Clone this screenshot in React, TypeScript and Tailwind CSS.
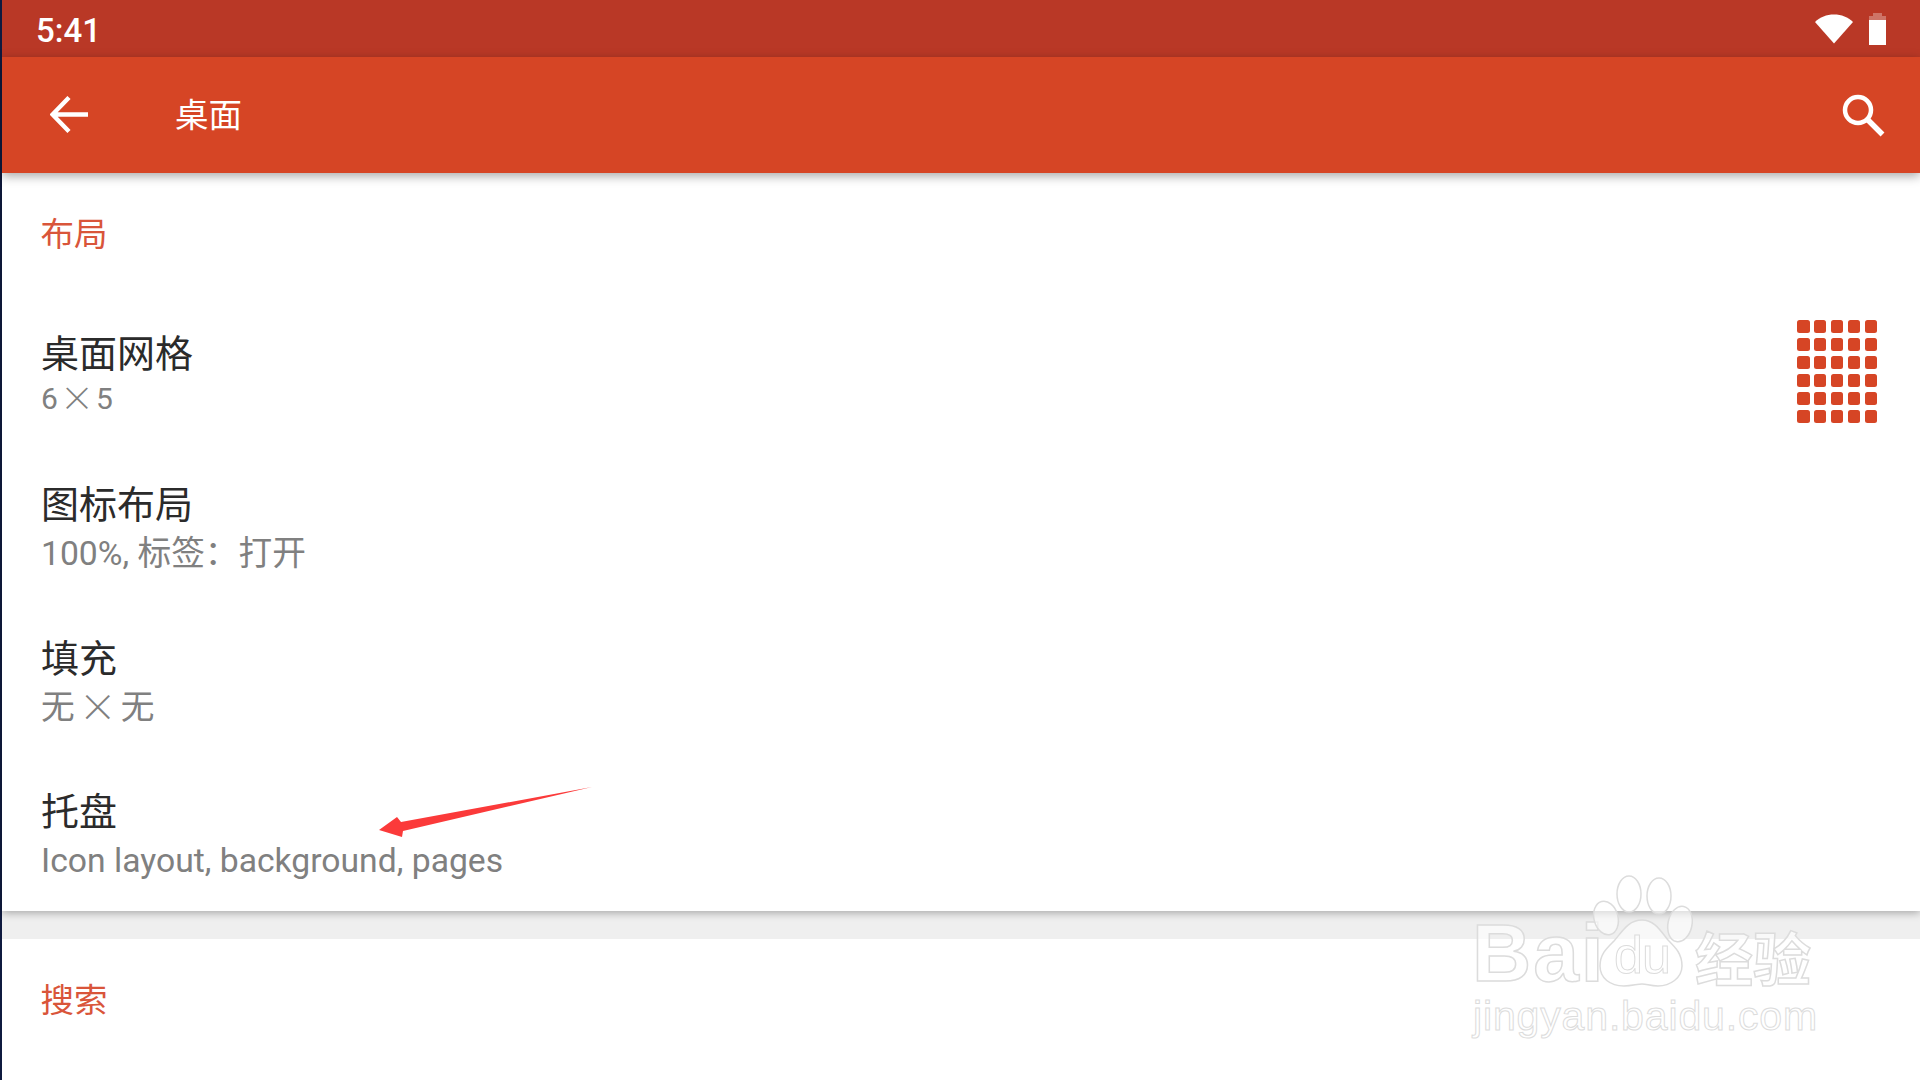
import React from "react";

const cjk = "font-['Roboto','Noto_Sans_CJK_SC',sans-serif]";

function Row({ title, sub, subClass, className }: { title: string; sub: React.ReactNode; subClass: string; className: string }) {
  return (
    <div className={`flex flex-col pl-[39px] ${className}`}>
      <div className="text-[38px] leading-[46px] text-[#2b2b2b]">{title}</div>
      <div className={`text-[#808080] ${subClass}`}>{sub}</div>
    </div>
  );
}

function Times({ className }: { className: string }) {
  return <span className={`inline-block translate-y-[2px] leading-none font-['Noto_Sans_CJK_JP',sans-serif] font-light ${className}`}>×</span>;
}

function GridIcon() {
  const cells = Array.from({ length: 30 });
  return (
    <div className="grid w-[80px] h-[103px] grid-cols-[repeat(5,12.5px)] justify-between content-between">
      {cells.map((_, i) => (
        <div key={i} className="w-[12.5px] h-[12.5px] rounded-[2.5px] bg-[#d64525]" />
      ))}
    </div>
  );
}

function Watermark() {
  const stroke = "text-white/60 [-webkit-text-stroke:1.5px_#dcdcdc]";
  return (
    <div className="absolute z-20 left-[1460px] top-[870px] w-[370px] h-[175px] font-['Liberation_Sans',sans-serif]">
      <div className={`absolute left-[12px] top-[42px] text-[82px] leading-[82px] font-bold tracking-[2px] ${stroke}`}>Bai</div>
      <svg className="absolute left-[130px] top-0" width="106" height="120" viewBox="0 0 106 120">
        <g fill="#ffffff" fillOpacity="0.55" stroke="#dcdcdc" strokeWidth="1.5">
          <ellipse cx="16" cy="48" rx="12" ry="17" transform="rotate(-15 16 48)" />
          <ellipse cx="39" cy="24" rx="12" ry="18" />
          <ellipse cx="69" cy="26" rx="12" ry="18" />
          <ellipse cx="90" cy="54" rx="12" ry="18" transform="rotate(12 90 54)" />
          <path d="M52 50c12 0 18 10 26 20 8 8 14 14 14 26 0 12-12 20-24 20-8 0-11-2-16-2s-10 2-18 2c-14 0-24-8-24-20 0-12 7-18 14-25 8-9 14-21 28-21z" />
        </g>
      </svg>
      <div className="absolute left-[154px] top-[55px] text-[52px] leading-[60px] text-white/60 [-webkit-text-stroke:1px_#dcdcdc] tracking-[-1px]">du</div>
      <div className={`absolute left-[235px] top-[54px] text-[58px] leading-[64px] font-bold font-['Noto_Sans_CJK_SC',sans-serif] ${stroke}`}>经验</div>
      <div className="absolute left-[13px] top-[122px] text-[41px] leading-[48px] text-white/60 [-webkit-text-stroke:1px_#dcdcdc] tracking-[0.85px]">jingyan.baidu.com</div>
    </div>
  );
}

export default function App() {
  return (
    <div className={`relative w-[1920px] h-[1080px] overflow-hidden bg-white flex ${cjk}`}>
      <div className="w-[2px] bg-[#0f1a3f] shrink-0" />
      <div className="flex-1 flex flex-col min-w-0">
        {/* status bar */}
        <div className="h-[57px] bg-[#b93826] flex items-center justify-between pl-[34px] pr-[34px] shrink-0">
          <span className="text-white text-[33px] font-medium leading-none font-['Roboto',sans-serif] pt-[4px]">5:41</span>
          <div className="flex items-center gap-[16px]">
            <svg width="38" height="30" viewBox="0 0 38 30">
              <path d="M19 29.500 0 8C5 3 11.500.5 19 .5S33 3 38 8Z" fill="#fff" />
            </svg>
            <svg width="17" height="32" viewBox="0 0 17 32">
              <path d="M4 0h9v3h4v4H0V3h4Z" fill="#fff" fillOpacity="0.3" />
              <rect x="0" y="7" width="17" height="25" fill="#fff" />
            </svg>
          </div>
        </div>
        {/* toolbar */}
        <div className="relative h-[116px] bg-[#d64525] flex items-center shrink-0 pl-[48px] pr-[35px] shadow-[0_3px_10px_rgba(0,0,0,0.35)] z-10">
          <svg width="38" height="38" viewBox="0 0 38 38" className="shrink-0">
            <path d="M38 18.500H3M19 1.500 2.500 18.500l16.500 17" fill="none" stroke="#fff" strokeWidth="4.400" />
          </svg>
          <span className="ml-[87px] pt-[2px] text-white text-[33.500px] leading-none">桌面</span>
          <svg width="44" height="44" viewBox="0 0 44 44" className="ml-auto">
            <circle cx="17" cy="17" r="13" fill="none" stroke="#fff" strokeWidth="4.500" />
            <path d="M26.500 26.500 41.500 41.500" fill="none" stroke="#fff" strokeWidth="5.500" />
          </svg>
        </div>
        {/* layout section */}
        <div className="flex flex-col bg-white shrink-0 h-[738px] shadow-[0_2px_8px_rgba(0,0,0,0.3)] z-[5]">
          <div className="pl-[38.500px] mt-[42px] text-[33.500px] leading-[40px] text-[#d9553a]">布局</div>
          <div className="flex justify-between items-start pr-[43px] mt-[65px]">
            <Row title="桌面网格" sub={<>6<Times className="text-[34px] mx-[2px]" />5</>} subClass="text-[30px] leading-[44px]" className="mt-[11px]" />
            <GridIcon />
          </div>
          <Row title="图标布局" sub="100%, 标签：打开" subClass="text-[33.700px] leading-[48px] mt-[2px]" className="mt-[59px]" />
          <Row title="填充" sub={<>无<Times className="text-[38px] mx-[4px]" />无</>} subClass="text-[33.700px] leading-[48px] mt-[2px]" className="mt-[58px]" />
          <Row title="托盘" sub="Icon layout, background, pages" subClass="text-[33.700px] leading-[48px] mt-[2px]" className="mt-[57px]" />
        </div>
        <div className="h-[28px] bg-[#efefef] shrink-0" />
        <div className="flex-1 bg-white pl-[38.500px] pt-[42px] text-[33.500px] leading-[40px] text-[#d9553a]">搜索</div>
      </div>
      {/* red annotation arrow */}
      <svg className="absolute z-20 left-[370px] top-[780px]" width="230" height="65" viewBox="370 780 230 65">
        <path d="M379 830 397 817 401 822 592 787 403 831 402 837Z" fill="#fb3a3a" />
      </svg>
      <Watermark />
    </div>
  );
}
